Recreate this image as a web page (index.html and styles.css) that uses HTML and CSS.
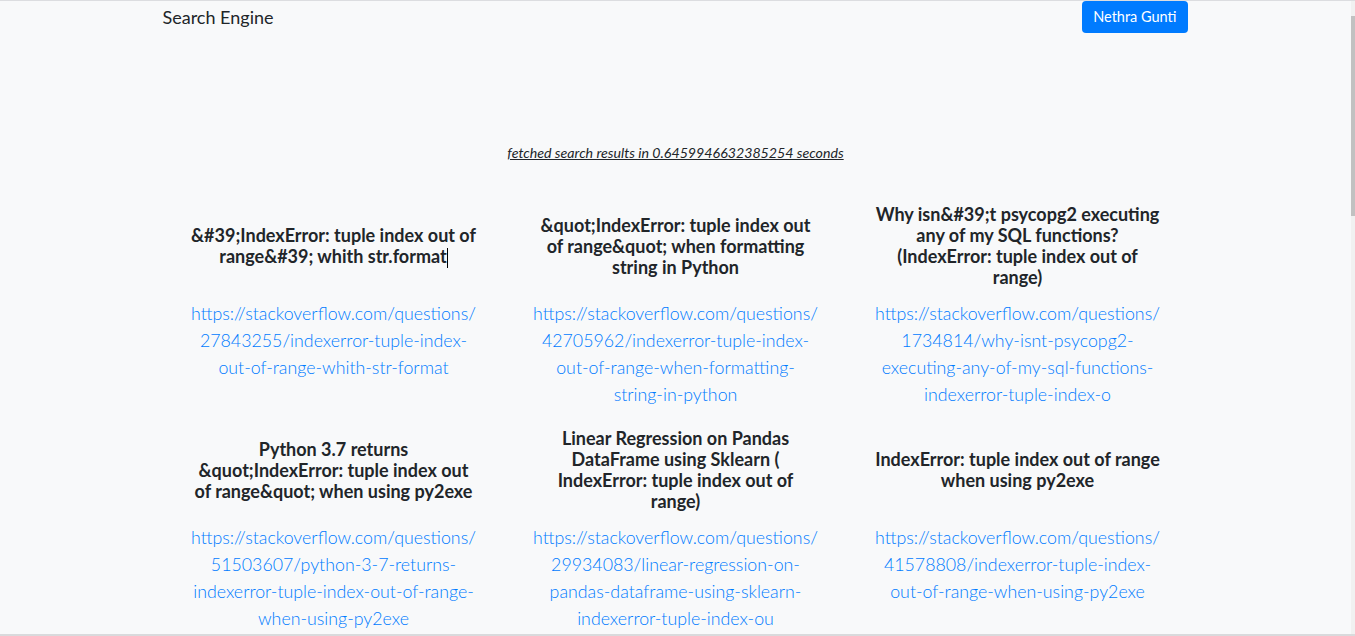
FILE: index.html
```html
<!DOCTYPE html>
<html lang="en">
<head>
<meta charset="utf-8">
<title>Search Engine</title>
<link rel="stylesheet" href="styles.css">
</head>
<body>
<div class="frame">
  <div class="page">
    <nav class="navbar">
      <span class="brand">Search Engine</span>
      <button class="btn-user" type="button">Nethra Gunti</button>
    </nav>
    <p class="info"><a href="#">fetched search results in 0.6459946632385254 seconds</a></p>
    <div class="results">
      <div class="card">
        <div class="card-title"><h5>&amp;#39;IndexError: tuple index out of range&amp;#39; whith str.format<span class="caret"></span></h5></div>
        <a class="card-link" href="#">https://stackoverflow.com/questions/27843255/indexerror-tuple-index-out-of-range-whith-str-format</a>
      </div>
      <div class="card">
        <div class="card-title"><h5>&amp;quot;IndexError: tuple index out of range&amp;quot; when formatting string in Python</h5></div>
        <a class="card-link" href="#">https://stackoverflow.com/questions/42705962/indexerror-tuple-index-out-of-range-when-formatting-string-in-python</a>
      </div>
      <div class="card">
        <div class="card-title"><h5>Why isn&amp;#39;t psycopg2 executing any of my SQL functions? (IndexError: tuple index out of range)</h5></div>
        <a class="card-link" href="#">https://stackoverflow.com/questions/1734814/why-isnt-psycopg2-executing-any-of-my-sql-functions-indexerror-tuple-index-o</a>
      </div>
      <div class="card">
        <div class="card-title"><h5>Python 3.7 returns &amp;quot;IndexError: tuple index out of range&amp;quot; when using py2exe</h5></div>
        <a class="card-link" href="#">https://stackoverflow.com/questions/51503607/python-3-7-returns-indexerror-tuple-index-out-of-range-when-using-py2exe</a>
      </div>
      <div class="card">
        <div class="card-title"><h5>Linear Regression on Pandas DataFrame using Sklearn ( IndexError: tuple index out of range)</h5></div>
        <a class="card-link" href="#">https://stackoverflow.com/questions/29934083/linear-regression-on-pandas-dataframe-using-sklearn-indexerror-tuple-index-ou</a>
      </div>
      <div class="card">
        <div class="card-title"><h5>IndexError: tuple index out of range when using py2exe</h5></div>
        <a class="card-link" href="#">https://stackoverflow.com/questions/41578808/indexerror-tuple-index-out-of-range-when-using-py2exe</a>
      </div>
    </div>
  </div>
  <div class="scrollbar"><div class="thumb"></div></div>
</div>
</body>
</html>
```
FILE: styles.css
```css
html, body {
  margin: 0;
  padding: 0;
  background: #f8f9fa;
}
body {
  font-family: Lato, "Noto Sans", sans-serif;
  color: #212529;
}
.frame {
  height: 636px;
  box-sizing: border-box;
  border-top: 1px solid #dcdde0;
  border-bottom: 2px solid #d9dadc;
  display: flex;
  overflow: hidden;
}
.page {
  flex: 1;
  overflow: hidden;
}
.scrollbar {
  width: 4px;
  background: #f1f1f1;
  padding-top: 15px;
}
.thumb {
  height: 200px;
  background: #c1c1c1;
}
.navbar {
  width: 1026px;
  margin: 0 auto;
  height: 32px;
  display: flex;
  align-items: center;
  justify-content: space-between;
}
.brand {
  font-size: 18px;
  line-height: 24px;
  color: #212529;
}
.btn-user {
  font-family: Lato, "Noto Sans", sans-serif;
  font-size: 14.5px;
  line-height: 24px;
  height: 32px;
  padding: 4px 11.5px;
  margin-right: 0.5px;
  border: none;
  border-radius: 4px;
  background: #007bff;
  color: #fff;
}
.info {
  margin: 110px 0 0;
  text-align: center;
  font-size: 14.2px;
  line-height: 20px;
  font-style: italic;
}
.info a {
  color: #212529;
  text-decoration: underline;
}
.results {
  width: 1026px;
  margin: 40px auto 0;
  display: grid;
  grid-template-columns: repeat(3, 342px);
  row-gap: 18px;
}
.card {
  padding: 0 27px;
  text-align: center;
  display: flex;
  flex-direction: column;
}
.card-title {
  height: 86px;
  display: flex;
  align-items: center;
  justify-content: center;
}
.card-title h5 {
  margin: 0;
  font-size: 18px;
  font-weight: 700;
  line-height: 21px;
  color: #212529;
}
.caret {
  display: inline-block;
  width: 1px;
  height: 20px;
  background: #000;
  vertical-align: -5px;
}
.card-link {
  margin: 11px 0.5px 0;
  min-height: 109px;
  font-size: 17.8px;
  font-weight: 300;
  line-height: 27px;
  color: #007bff;
  text-decoration: none;
  overflow-wrap: break-word;
}
```
